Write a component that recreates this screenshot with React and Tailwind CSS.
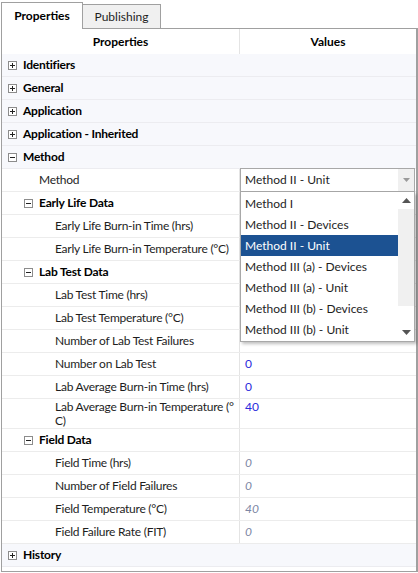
import React from 'react';

const font = "font-['Lato','Liberation_Sans',sans-serif]";

const Box = ({ open }) => (
  <svg width="9" height="9" viewBox="0 0 9 9" className="shrink-0">
    <rect x="0.5" y="0.5" width="8" height="8" fill="white" stroke="#8c8c8c" />
    <line x1="2" y1="4.5" x2="7" y2="4.5" stroke="#222" />
    {!open && <line x1="4.5" y1="2" x2="4.5" y2="7" stroke="#222" />}
  </svg>
);

const Category = ({ label, open }) => (
  <div className="h-[23px] flex items-center bg-[#f7f8fc] border-b border-[#ececf0]">
    <div className="pl-[6px] flex items-center gap-[6px]">
      <Box open={open} />
      <span className="font-bold text-black whitespace-nowrap tracking-[-0.2px]">{label}</span>
    </div>
  </div>
);

const Sub = ({ label }) => (
  <div className="h-[23px] flex border-b border-[#ececec]">
    <div className="w-[238px] pl-[22px] flex items-center gap-[6px] border-r border-[#e4e4e4]">
      <Box open />
      <span className="font-bold text-black whitespace-nowrap tracking-[-0.2px]">{label}</span>
    </div>
    <div className="flex-1" />
  </div>
);

const Leaf = ({ label, value, kind, indent = 'pl-[53px]', tall }) => (
  <div className={`${tall ? 'h-[30px]' : 'h-[23px]'} flex border-b border-[#ececec]`}>
    <div className={`w-[238px] ${indent} flex ${tall ? 'items-start leading-[14px] pt-[1px]' : 'items-center'} border-r border-[#e4e4e4] text-[#1e1e1e] whitespace-nowrap tracking-[-0.25px]`}>
      <span>{label}</span>
    </div>
    <div className={`flex-1 pl-[5px] flex ${tall ? 'items-start pt-[1px] leading-[14px]' : 'items-center'}`}>
      {kind === 'blue' && <span className="text-[#2b2bdc]">{value}</span>}
      {kind === 'italic' && <span className="italic text-[#7c86a4]">{value}</span>}
    </div>
  </div>
);

const options = [
  'Method I',
  'Method II - Devices',
  'Method II - Unit',
  'Method III (a) - Devices',
  'Method III (a) - Unit',
  'Method III (b) - Devices',
  'Method III (b) - Unit',
];

export default function App() {
  return (
    <div className={`w-[418px] h-[573px] bg-white relative text-[12px] ${font}`}>
      <div className="flex items-end h-[28px] pl-[1px] pt-[2px]">
        <div className="relative z-10 -mb-px h-[27px] w-[82px] bg-white border border-b-0 border-[#a0a0a0] flex items-center justify-center font-bold text-black">
          Properties
        </div>
        <div className="h-[24px] w-[78px] bg-[#f0f0f0] border border-l-0 border-b-0 border-[#a0a0a0] flex items-center justify-center text-[#1e1e1e]">
          Publishing
        </div>
      </div>

      <div className="ml-[1px] w-[417px] h-[544px] border border-r-2 border-[#a0a0a0]">
        <div className="h-[25px] flex font-bold text-black">
          <div className="w-[238px] flex items-center justify-center border-r border-[#e4e4e4]">Properties</div>
          <div className="flex-1 flex items-center justify-center">Values</div>
        </div>

        <Category label="Identifiers" />
        <Category label="General" />
        <Category label="Application" />
        <Category label="Application - Inherited" />
        <Category label="Method" open />
        <Leaf label="Method" indent="pl-[37px]" />
        <Sub label="Early Life Data" />
        <Leaf label="Early Life Burn-in Time (hrs)" />
        <Leaf label="Early Life Burn-in Temperature (°C)" />
        <Sub label="Lab Test Data" />
        <Leaf label="Lab Test Time (hrs)" />
        <Leaf label="Lab Test Temperature (°C)" />
        <Leaf label="Number of Lab Test Failures" />
        <Leaf label="Number on Lab Test" value="0" kind="blue" />
        <Leaf label="Lab Average Burn-in Time (hrs)" value="0" kind="blue" />
        <Leaf label={<>Lab Average Burn-in Temperature (°<br />C)</>} value="40" kind="blue" tall />
        <Sub label="Field Data" />
        <Leaf label="Field Time (hrs)" value="0" kind="italic" />
        <Leaf label="Number of Field Failures" value="0" kind="italic" />
        <Leaf label="Field Temperature (°C)" value="40" kind="italic" />
        <Leaf label="Field Failure Rate (FIT)" value="0" kind="italic" />
        <Category label="History" />
      </div>

      {/* combo box + open list */}
      <div className="absolute left-[240px] top-[168px] w-[175px] z-20">
        <div className="h-[24px] flex border border-[#a8a8a8] bg-white">
          <div className="flex-1 pl-[4px] flex items-center text-[#1e1e1e]">Method II - Unit</div>
          <div className="w-[16px] bg-[#f0f0f0] flex items-center justify-center">
            <svg width="7" height="4" viewBox="0 0 7 4"><path d="M0 0h7L3.5 4z" fill="#9a9a9a" /></svg>
          </div>
        </div>
        <div className="h-[150px] flex border border-t-0 border-[#a8a8a8] bg-white shadow-[2px_2px_3px_rgba(0,0,0,0.25)]">
          <div className="flex-1 pt-[1px]">
            {options.map((o) => (
              <div
                key={o}
                className={`h-[21px] pl-[4px] flex items-center ${o === 'Method II - Unit' ? 'bg-[#1c5292] text-white' : 'text-[#1e1e1e]'}`}
              >
                {o}
              </div>
            ))}
          </div>
          <div className="w-[16px] flex flex-col">
            <div className="h-[17px] flex items-center justify-center">
              <svg width="9" height="5" viewBox="0 0 9 5"><path d="M0 5h9L4.5 0z" fill="#555" /></svg>
            </div>
            <div className="h-[97px] bg-[#f0f0f0]" />
            <div className="flex-1" />
            <div className="h-[17px] flex items-center justify-center">
              <svg width="9" height="5" viewBox="0 0 9 5"><path d="M0 0h9L4.5 5z" fill="#555" /></svg>
            </div>
          </div>
        </div>
      </div>
    </div>
  );
}
